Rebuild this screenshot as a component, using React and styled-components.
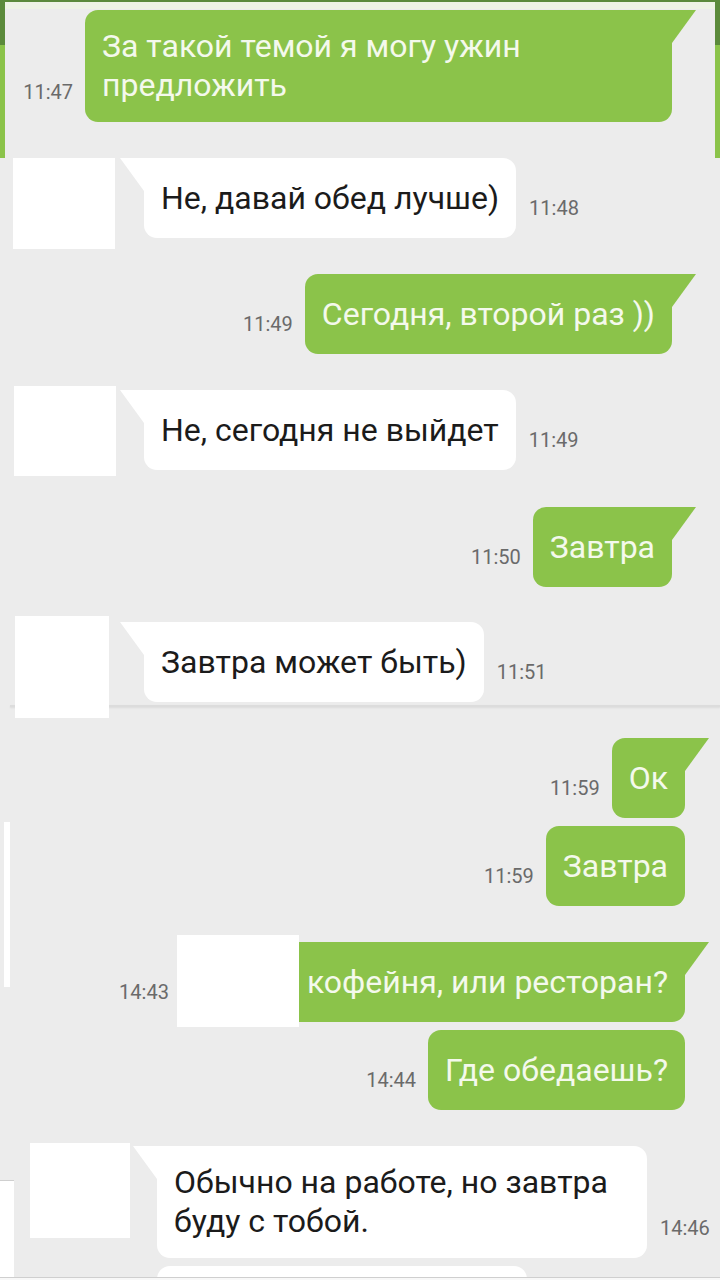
import React from 'react'
import styled, { createGlobalStyle, css } from 'styled-components'

const GREEN = '#8bc34a'
const GREEN_DARK = '#5b8a3b'
const PAGE = '#ececec'

const messages = [
  { id: 1, side: 'in', top: 0, avatar: { x: 13, w: 102, h: 91 }, gap: 29, offset: 0, text: 'Не, давай обед лучше)', time: '11:48', tail: true },
  { id: 2, side: 'out', top: 25, edge: 48, text: 'Сегодня, второй раз ))', time: '11:49', tail: true },
  { id: 3, side: 'in', top: 32, avatar: { x: 14, w: 102, h: 90 }, gap: 28, offset: 4, text: 'Не, сегодня не выйдет', time: '11:49', tail: true },
  { id: 4, side: 'out', top: 31, edge: 48, text: 'Завтра', time: '11:50', tail: true },
  { id: 5, side: 'in', top: 29, avatar: { x: 15, w: 94, h: 102 }, gap: 35, offset: 6, text: 'Завтра может быть)', time: '11:51', tail: true, seam: true },
  { id: 6, side: 'out', top: 31, edge: 35, text: 'Ок', time: '11:59', tail: true },
  { id: 7, side: 'out', top: 8, edge: 35, text: 'Завтра', time: '11:59' },
  { id: 8, side: 'out', top: 29, edge: 35, text: 'кофейня, или ресторан?', time: '14:43', tail: true, hidden: true },
  { id: 9, side: 'out', top: 8, edge: 35, text: 'Где обедаешь?', time: '14:44' },
  { id: 10, side: 'in', top: 33, avatar: { x: 30, w: 100, h: 95 }, gap: 27, offset: 3, text: 'Обычно на работе, но завтра буду с тобой.', time: '14:46', tail: true, width: 490 },
]

export default function App() {
  return (
    <Screen>
      <GlobalStyle />
      <Feed>
        <TopFrame>
          <TopPanel>
            <Row $side="out" $edge={43} $top={1}>
              <Time>11:47</Time>
              <Bubble $out $tail style={{ width: 587 }}>За такой темой я могу ужин предложить</Bubble>
            </Row>
          </TopPanel>
        </TopFrame>

        {messages.map(m => m.side === 'in' ? (
          <React.Fragment key={m.id}>
            <Row $side="in" $top={m.top}>
              <Avatar $x={m.avatar.x} $w={m.avatar.w} $h={m.avatar.h} />
              <Group $gap={m.gap} $offset={m.offset}>
                <Bubble $tail={m.tail} style={m.width ? { width: m.width } : undefined}>{m.text}</Bubble>
                <Time $after>{m.time}</Time>
              </Group>
            </Row>
            {m.seam && <Seam />}
          </React.Fragment>
        ) : (
          <Row key={m.id} $side="out" $edge={m.edge} $top={m.top}>
            <Time>{m.time}</Time>
            {m.hidden && <Redact />}
            <Bubble $out $tail={m.tail} $cut={m.hidden}>{m.text}</Bubble>
          </Row>
        ))}

        <Row $side="in" $top={8}>
          <PeekBubble />
        </Row>
      </Feed>
      <EdgeBar />
      <CornerPatch />
      <Footer />
    </Screen>
  )
}

const GlobalStyle = createGlobalStyle`
  html, body {
    margin: 0;
    padding: 0;
    background: ${PAGE};
  }
  body {
    font-family: Roboto, "Noto Sans", "Liberation Sans", sans-serif;
    -webkit-font-smoothing: antialiased;
  }
`

const Screen = styled.div`
  position: relative;
  width: 720px;
  height: 1280px;
  background: ${PAGE};
  display: flex;
  flex-direction: column;
  overflow: hidden;
`

const Feed = styled.div`
  flex: 1;
  display: flex;
  flex-direction: column;
  overflow: hidden;
`

const TopFrame = styled.div`
  flex: none;
  height: 158px;
  box-sizing: border-box;
  padding: 2px 5px 0;
  background: linear-gradient(${GREEN_DARK} 0 45px, ${GREEN} 45px);
`

const TopPanel = styled.div`
  height: 100%;
  box-sizing: border-box;
  background: ${PAGE};
  border-top: 7px solid #eef3e5;
`

const Row = styled.div`
  flex: none;
  display: flex;
  margin-top: ${p => p.$top}px;
  ${p => p.$side === 'out' ? css`
    justify-content: flex-end;
    align-items: flex-end;
    padding-right: ${p.$edge}px;
  ` : css`
    justify-content: flex-start;
    align-items: flex-start;
  `}
`

const Group = styled.div`
  display: flex;
  align-items: flex-end;
  margin-left: ${p => p.$gap}px;
  margin-top: ${p => p.$offset}px;
`

const Avatar = styled.div`
  position: relative;
  z-index: 1;
  flex: none;
  margin-left: ${p => p.$x}px;
  width: ${p => p.$w}px;
  height: ${p => p.$h}px;
  background: #fff;
`

const Bubble = styled.div`
  position: relative;
  box-sizing: border-box;
  min-height: 80px;
  display: flex;
  flex-direction: column;
  justify-content: center;
  padding: 17px;
  font-size: 32px;
  line-height: 39px;
  background: ${p => p.$out ? GREEN : '#fff'};
  color: ${p => p.$out ? '#f4f9ec' : '#1b1b1b'};
  border-radius: 13px;
  ${p => p.$tail && p.$out && css`
    border-top-right-radius: 0;
    &::after {
      content: '';
      position: absolute;
      top: 0;
      right: -24px;
      border-top: 33px solid ${GREEN};
      border-right: 24px solid transparent;
    }
  `}
  ${p => p.$tail && !p.$out && css`
    border-top-left-radius: 0;
    &::after {
      content: '';
      position: absolute;
      top: 0;
      left: -24px;
      border-top: 33px solid #fff;
      border-left: 24px solid transparent;
    }
  `}
  ${p => p.$cut && css`
    border-top-left-radius: 0;
    border-bottom-left-radius: 0;
    padding-left: 8px;
  `}
`

const Time = styled.div`
  flex: none;
  font-size: 20px;
  line-height: 24px;
  color: #6a6a6a;
  margin-bottom: 18px;
  margin-right: 12px;
  ${p => p.$after && css`
    margin-right: 0;
    margin-left: 13px;
  `}
`

const Redact = styled.div`
  flex: none;
  width: 122px;
  height: 92px;
  margin-bottom: -5px;
  margin-left: -4px;
  background: #fff;
`

const Seam = styled.div`
  flex: none;
  height: 2px;
  margin: -13px 0 0 10px;
  background: #dcdcdc;
  box-shadow: 0 1px 2px rgba(0, 0, 0, 0.08);
`

const PeekBubble = styled.div`
  margin-left: 157px;
  width: 370px;
  height: 40px;
  background: #fff;
  border-radius: 13px;
`

const EdgeBar = styled.div`
  position: absolute;
  left: 4px;
  top: 822px;
  width: 6px;
  height: 165px;
  background: #fff;
`

const CornerPatch = styled.div`
  position: absolute;
  left: 0;
  top: 1180px;
  width: 14px;
  height: 97px;
  background: #fff;
  border-top: 1px solid #cfcfcf;
`

const Footer = styled.div`
  position: absolute;
  left: 0;
  right: 0;
  bottom: 0;
  height: 2px;
  background: #f8f8f8;
  border-top: 1px solid #cfcfcf;
`
